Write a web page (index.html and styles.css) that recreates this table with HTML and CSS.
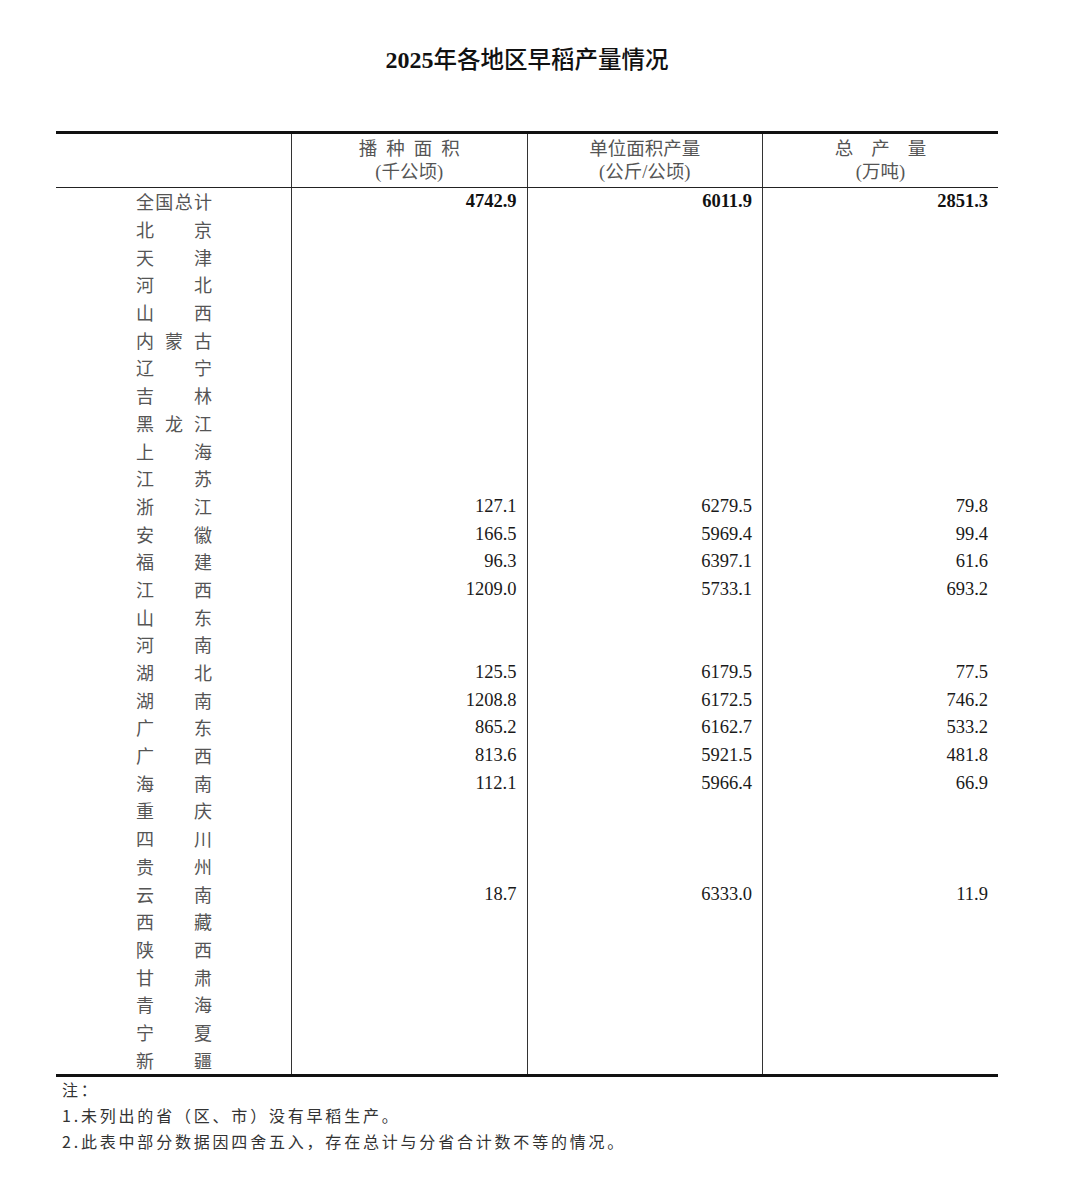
FILE: index.html
```html
<!DOCTYPE html>
<html lang="zh-CN">
<head>
<meta charset="utf-8">
<title>2025年各地区早稻产量情况</title>
<link rel="stylesheet" href="styles.css">
</head>
<body>
<div class="page">
  <h1 class="title"><span class="num">2025</span>年各地区早稻产量情况</h1>
  <table class="data">
    <thead>
      <tr>
        <th class="corner"></th>
        <th><div class="h1 sp9">播种面积</div><div class="h2">(千公顷)</div></th>
        <th><div class="h1">单位面积产量</div><div class="h2">(公斤/公顷)</div></th>
        <th><div class="h1 sp18">总产量</div><div class="h2">(万吨)</div></th>
      </tr>
    </thead>
    <tbody>
      <tr class="total"><td class="name"><div class="nm"><span>全</span><span>国</span><span>总</span><span>计</span></div></td><td class="v">4742.9</td><td class="v">6011.9</td><td class="v">2851.3</td></tr>
      <tr><td class="name"><div class="nm"><span>北</span><span>京</span></div></td><td></td><td></td><td></td></tr>
      <tr><td class="name"><div class="nm"><span>天</span><span>津</span></div></td><td></td><td></td><td></td></tr>
      <tr><td class="name"><div class="nm"><span>河</span><span>北</span></div></td><td></td><td></td><td></td></tr>
      <tr><td class="name"><div class="nm"><span>山</span><span>西</span></div></td><td></td><td></td><td></td></tr>
      <tr><td class="name"><div class="nm"><span>内</span><span>蒙</span><span>古</span></div></td><td></td><td></td><td></td></tr>
      <tr><td class="name"><div class="nm"><span>辽</span><span>宁</span></div></td><td></td><td></td><td></td></tr>
      <tr><td class="name"><div class="nm"><span>吉</span><span>林</span></div></td><td></td><td></td><td></td></tr>
      <tr><td class="name"><div class="nm"><span>黑</span><span>龙</span><span>江</span></div></td><td></td><td></td><td></td></tr>
      <tr><td class="name"><div class="nm"><span>上</span><span>海</span></div></td><td></td><td></td><td></td></tr>
      <tr><td class="name"><div class="nm"><span>江</span><span>苏</span></div></td><td></td><td></td><td></td></tr>
      <tr><td class="name"><div class="nm"><span>浙</span><span>江</span></div></td><td class="v">127.1</td><td class="v">6279.5</td><td class="v">79.8</td></tr>
      <tr><td class="name"><div class="nm"><span>安</span><span>徽</span></div></td><td class="v">166.5</td><td class="v">5969.4</td><td class="v">99.4</td></tr>
      <tr><td class="name"><div class="nm"><span>福</span><span>建</span></div></td><td class="v">96.3</td><td class="v">6397.1</td><td class="v">61.6</td></tr>
      <tr><td class="name"><div class="nm"><span>江</span><span>西</span></div></td><td class="v">1209.0</td><td class="v">5733.1</td><td class="v">693.2</td></tr>
      <tr><td class="name"><div class="nm"><span>山</span><span>东</span></div></td><td></td><td></td><td></td></tr>
      <tr><td class="name"><div class="nm"><span>河</span><span>南</span></div></td><td></td><td></td><td></td></tr>
      <tr><td class="name"><div class="nm"><span>湖</span><span>北</span></div></td><td class="v">125.5</td><td class="v">6179.5</td><td class="v">77.5</td></tr>
      <tr><td class="name"><div class="nm"><span>湖</span><span>南</span></div></td><td class="v">1208.8</td><td class="v">6172.5</td><td class="v">746.2</td></tr>
      <tr><td class="name"><div class="nm"><span>广</span><span>东</span></div></td><td class="v">865.2</td><td class="v">6162.7</td><td class="v">533.2</td></tr>
      <tr><td class="name"><div class="nm"><span>广</span><span>西</span></div></td><td class="v">813.6</td><td class="v">5921.5</td><td class="v">481.8</td></tr>
      <tr><td class="name"><div class="nm"><span>海</span><span>南</span></div></td><td class="v">112.1</td><td class="v">5966.4</td><td class="v">66.9</td></tr>
      <tr><td class="name"><div class="nm"><span>重</span><span>庆</span></div></td><td></td><td></td><td></td></tr>
      <tr><td class="name"><div class="nm"><span>四</span><span>川</span></div></td><td></td><td></td><td></td></tr>
      <tr><td class="name"><div class="nm"><span>贵</span><span>州</span></div></td><td></td><td></td><td></td></tr>
      <tr><td class="name"><div class="nm"><span>云</span><span>南</span></div></td><td class="v">18.7</td><td class="v">6333.0</td><td class="v">11.9</td></tr>
      <tr><td class="name"><div class="nm"><span>西</span><span>藏</span></div></td><td></td><td></td><td></td></tr>
      <tr><td class="name"><div class="nm"><span>陕</span><span>西</span></div></td><td></td><td></td><td></td></tr>
      <tr><td class="name"><div class="nm"><span>甘</span><span>肃</span></div></td><td></td><td></td><td></td></tr>
      <tr><td class="name"><div class="nm"><span>青</span><span>海</span></div></td><td></td><td></td><td></td></tr>
      <tr><td class="name"><div class="nm"><span>宁</span><span>夏</span></div></td><td></td><td></td><td></td></tr>
      <tr><td class="name"><div class="nm"><span>新</span><span>疆</span></div></td><td></td><td></td><td></td></tr>
    </tbody>
  </table>
  <div class="notes">
    <p>注：</p>
    <p>1.未列出的省（区、市）没有早稻生产。</p>
    <p>2.此表中部分数据因四舍五入，存在总计与分省合计数不等的情况。</p>
  </div>
</div>
</body>
</html>
```

FILE: styles.css
```css
html, body {
  margin: 0;
  padding: 0;
  background: #ffffff;
}

body {
  font-family: "Liberation Serif", "Noto Sans CJK SC", serif;
  color: #222;
}

.page {
  width: 942px;
  margin-left: 56px;
  padding-top: 43px;
}

.title {
  margin: 0;
  height: 88px;
  text-align: center;
  font-family: "Liberation Serif", "Noto Sans CJK SC", serif;
  font-size: 23.5px;
  font-weight: 500;
  line-height: 34px;
  color: #111;
}

.title .num {
  font-weight: 700;
  font-size: 24px;
}

.data {
  width: 942px;
  border-collapse: collapse;
  table-layout: fixed;
  border-top: 3px solid #111;
  border-bottom: 3px solid #111;
}

.data th, .data td {
  padding: 0;
}

.data th {
  height: 50px;
  border-bottom: 1px solid #222;
  border-left: 1px solid #333;
  font-weight: normal;
  text-align: center;
  vertical-align: middle;
  font-family: "Liberation Serif", "Noto Sans CJK SC", serif;
  font-size: 18.5px;
  line-height: 23px;
  color: #555;
  padding-top: 2px;
  padding-bottom: 1px;
}

.data th.corner {
  border-left: none;
}

.h1 {
  white-space: nowrap;
}

.sp9 {
  letter-spacing: 9px;
  margin-right: -9px;
}

.sp18 {
  letter-spacing: 18px;
  margin-right: -18px;
}

.data td {
  height: 27.7px;
  border-left: 1px solid #333;
  font-size: 18.5px;
  line-height: 27px;
  color: #1a1a1a;
  text-align: right;
  padding-right: 10px;
  vertical-align: middle;
  white-space: nowrap;
}

.data td.name {
  border-left: none;
  padding-right: 0;
}

.nm {
  width: 76px;
  margin-left: 80px;
  display: flex;
  justify-content: space-between;
  font-family: "Noto Sans CJK SC", sans-serif;
  font-size: 18px;
  color: #555;
  line-height: 27px;
}

.total .v {
  font-weight: 700;
  color: #111;
}

.notes {
  padding-top: 0;
  padding-left: 6px;
  font-family: "Noto Sans CJK SC", sans-serif;
  font-size: 16px;
  letter-spacing: 2.8px;
  color: #333;
}

.notes p {
  margin: 0;
  line-height: 26px;
}

.notes p:first-child {
  margin-top: -1px;
}
```
